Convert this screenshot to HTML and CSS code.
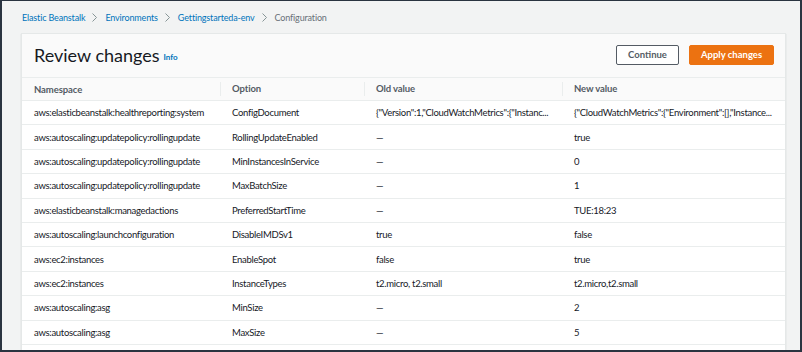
FILE: index.html
```html
<!DOCTYPE html>
<html>
    <head>
        <link rel="stylesheet" href="styles.css">
    </head>
    <body>
        <div class="crumbs">
            <a href="#">Elastic Beanstalk</a>
            <svg class="sep" width="5" height="9" viewBox="0 0 5 9"><polyline points="0.5,0.5 4.5,4.5 0.5,8.5" fill="none" stroke="#879596" stroke-width="1"/></svg>
            <a href="#">Environments</a>
            <svg class="sep" width="5" height="9" viewBox="0 0 5 9"><polyline points="0.5,0.5 4.5,4.5 0.5,8.5" fill="none" stroke="#879596" stroke-width="1"/></svg>
            <a href="#">Gettingstarteda-env</a>
            <svg class="sep" width="5" height="9" viewBox="0 0 5 9"><polyline points="0.5,0.5 4.5,4.5 0.5,8.5" fill="none" stroke="#879596" stroke-width="1"/></svg>
            <span class="current">Configuration</span>
        </div>
        <div class="panel">
            <div class="panel-head">
                <h1>Review changes</h1>
                <a class="info" href="#">Info</a>
                <div class="actions">
                    <button class="btn">Continue</button>
                    <button class="btn primary">Apply changes</button>
                </div>
            </div>
            <div class="changes">
                <div class="row head">
                    <div>Namespace</div><div>Option</div><div>Old value</div><div>New value</div>
                </div>
                <div class="row"><div>aws:elasticbeanstalk:healthreporting:system</div><div>ConfigDocument</div><div>{"Version":1,"CloudWatchMetrics":{"Instanc...</div><div>{"CloudWatchMetrics":{"Environment":[],"Instance...</div></div>
                <div class="row"><div>aws:autoscaling:updatepolicy:rollingupdate</div><div>RollingUpdateEnabled</div><div>&mdash;</div><div>true</div></div>
                <div class="row"><div>aws:autoscaling:updatepolicy:rollingupdate</div><div>MinInstancesInService</div><div>&mdash;</div><div>0</div></div>
                <div class="row"><div>aws:autoscaling:updatepolicy:rollingupdate</div><div>MaxBatchSize</div><div>&mdash;</div><div>1</div></div>
                <div class="row"><div>aws:elasticbeanstalk:managedactions</div><div>PreferredStartTime</div><div>&mdash;</div><div>TUE:18:23</div></div>
                <div class="row"><div>aws:autoscaling:launchconfiguration</div><div>DisableIMDSv1</div><div>true</div><div>false</div></div>
                <div class="row"><div>aws:ec2:instances</div><div>EnableSpot</div><div>false</div><div>true</div></div>
                <div class="row"><div>aws:ec2:instances</div><div>InstanceTypes</div><div>t2.micro, t2.small</div><div>t2.micro,t2.small</div></div>
                <div class="row"><div>aws:autoscaling:asg</div><div>MinSize</div><div>&mdash;</div><div>2</div></div>
                <div class="row"><div>aws:autoscaling:asg</div><div>MaxSize</div><div>&mdash;</div><div>5</div></div>
            </div>
        </div>
    </body>
</html>
```

FILE: styles.css
```css
html, body {
    margin: 0;
}

body {
    box-sizing: border-box;
    height: 352px;
    overflow: hidden;
    background-color: #f2f3f3;
    border: 2px solid #2a3440;
    border-top-width: 1px;
    font-family: Lato, sans-serif;
    color: #16191f;
}

.crumbs {
    display: flex;
    align-items: center;
    height: 32px;
    padding-left: 20px;
    font-size: 9px;
    letter-spacing: -0.15px;
}

.crumbs a {
    color: #0073bb;
    text-decoration: none;
}

.crumbs .sep {
    margin: 0 8px 0 7px;
}

.crumbs .current {
    color: #687078;
}

.panel {
    margin: 0 14px 0 19px;
    height: 330px;
    background-color: #fff;
    border: 1px solid #e5e8e8;
    border-bottom: none;
    box-shadow: 0 1px 1px rgba(0, 28, 36, 0.2);
}

.panel-head {
    display: flex;
    align-items: center;
    height: 43px;
    padding: 0 11px 2px 12px;
    box-sizing: border-box;
    background-color: #fafafa;
}

.panel-head h1 {
    margin: 0;
    font-size: 18px;
    font-weight: 400;
    color: #16191f;
}

.info {
    margin: 5px 0 0 4px;
    font-size: 8px;
    font-weight: 700;
    color: #0073bb;
    text-decoration: none;
}

.actions {
    display: flex;
    gap: 10px;
    margin-left: auto;
}

.btn {
    width: 63px;
    height: 20px;
    padding: 0;
    border: 1px solid #545b64;
    border-radius: 2px;
    background-color: #fff;
    color: #545b64;
    font-family: Lato, sans-serif;
    font-size: 9.5px;
    font-weight: 700;
}

.btn.primary {
    width: 85px;
    border-color: #ec7211;
    background-color: #ec7211;
    color: #fff;
}

.changes {
    font-size: 9.5px;
    letter-spacing: -0.3px;
}

.row {
    display: grid;
    grid-template-columns: 198px 144px 198px 1fr;
    height: 24.4px;
    box-sizing: border-box;
    align-items: center;
    border-bottom: 1px solid #eaeded;
}

.row > div {
    padding: 0 12px;
    white-space: nowrap;
    overflow: hidden;
    text-overflow: ellipsis;
}

.row.head {
    height: 24px;
    border-top: 1px solid #eaeded;
    background-color: #fafafa;
    font-weight: 700;
    color: #545b64;
    letter-spacing: -0.1px;
}

.row.head > div + div {
    background: linear-gradient(#eaeded, #eaeded) left center / 1px 14px no-repeat;
    line-height: 22px;
}
```
